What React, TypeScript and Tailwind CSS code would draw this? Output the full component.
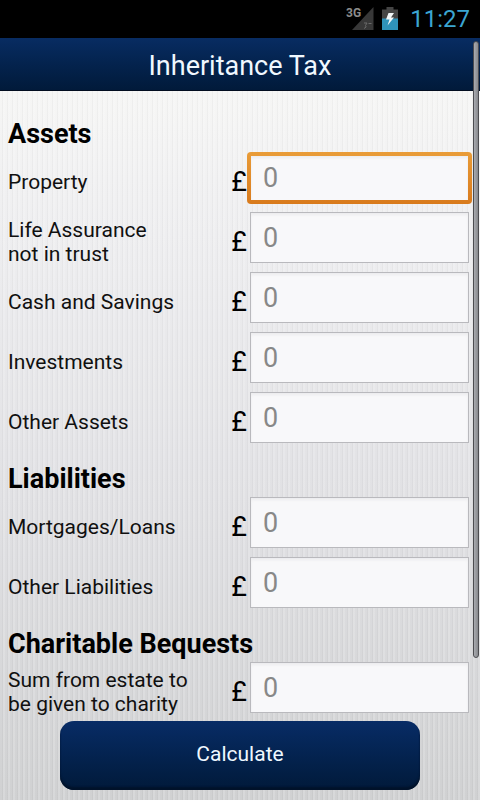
import React from "react";

type Field = { id: string; label: string[]; focused?: boolean };
type Section = { title: string; fields: Field[] };

const sections: Section[] = [
  {
    title: "Assets",
    fields: [
      { id: "property", label: ["Property"], focused: true },
      { id: "life-assurance", label: ["Life Assurance", "not in trust"] },
      { id: "cash", label: ["Cash and Savings"] },
      { id: "investments", label: ["Investments"] },
      { id: "other-assets", label: ["Other Assets"] },
    ],
  },
  {
    title: "Liabilities",
    fields: [
      { id: "mortgages", label: ["Mortgages/Loans"] },
      { id: "other-liabilities", label: ["Other Liabilities"] },
    ],
  },
  {
    title: "Charitable Bequests",
    fields: [{ id: "charity", label: ["Sum from estate to", "be given to charity"] }],
  },
];

function SignalIcon() {
  return (
    <svg width="28" height="24" viewBox="0 0 28 24" aria-hidden="true">
      <path d="M27.500 0V23H6Z" fill="#383838" />
      <path d="M18 16h3l-1.500 2.500q2 1.500-1.500 3M22.500 16.500h3" stroke="#6a6a6a" strokeWidth="1" fill="none" />
      <text x="0" y="10" fontSize="12" fontWeight="700" fill="#8c8c8c" fontFamily="Roboto, sans-serif">
        3G
      </text>
    </svg>
  );
}

function BatteryIcon() {
  return (
    <svg width="16" height="24" viewBox="0 0 16 24" aria-hidden="true">
      <path d="M4.500 0h7v2.500H16V12H0V2.500h4.500Z" fill="#454545" />
      <path d="M0 11.500h16V23H0Z" fill="#2f93ba" />
      <path d="M6.500 6H12L9 10.500H12L5.500 18.500 7.500 12.500H4Z" fill="#f2f6f8" />
    </svg>
  );
}

function FieldRow({ field }: { field: Field }) {
  return (
    <div className="flex h-[60px] items-start pr-2 pl-2">
      <label
        htmlFor={field.id}
        className="flex h-16 flex-1 flex-col justify-center text-[21px] leading-6 text-[#101010]"
      >
        {field.label.map((line) => (
          <span key={line}>{line}</span>
        ))}
      </label>
      <span className="flex h-16 items-center text-[27px] leading-8 text-black">£</span>
      <span
        className={
          field.focused
            ? "mt-[2px] w-[225px] rounded-[4px] bg-linear-to-b from-[#e99c38] to-[#d87a1c] p-1"
            : "mt-[2px] w-[225px] px-[3px]"
        }
      >
        <input
          id={field.id}
          type="text"
          inputMode="decimal"
          placeholder="0"
          className={
            field.focused
              ? "block h-11 w-full bg-[#f8f8fa] px-3 text-[27px] shadow-[inset_0_2px_3px_#ececee] outline-none placeholder:text-[#888]"
              : "block h-[51px] w-full border border-[#b9b9bd] bg-[#f8f8fa] px-3 text-[27px] shadow-[inset_0_2px_3px_#ececee] outline-none placeholder:text-[#888]"
          }
        />
      </span>
    </div>
  );
}

export default function App() {
  return (
    <div className="flex min-h-screen flex-col bg-black font-[Roboto,sans-serif]">
      <div className="flex h-[38px] items-center justify-end pr-[10px]">
        <SignalIcon />
        <span className="ml-2 flex">
          <BatteryIcon />
        </span>
        <span className="ml-3 text-2xl leading-8 text-[#3ba6d2]">11:27</span>
      </div>
      <div className="relative flex flex-1 flex-col">
        <header className="flex h-[53px] items-center justify-center border-b border-[#020d20] bg-linear-to-b from-[#082c62] to-[#011a3a] pt-1">
          <h1 className="text-[27px] leading-8 text-[#f0f8ff]">Inheritance Tax</h1>
        </header>
        <main className="flex-1 bg-[repeating-linear-gradient(90deg,#0000_0_2px,#00000007_2px_3px,#ffffff28_3px_5px),linear-gradient(#f6f6f5,#eeeef0_20%,#e0e0e3_60%,#d0d1d2)] pt-[14px] pb-[10px]">
          <form onSubmit={(event) => event.preventDefault()}>
            {sections.map((section) => (
              <section key={section.title}>
                <h2 className="h-[45px] pt-[13px] pl-2 text-[27px] leading-8 font-bold text-black">
                  {section.title}
                </h2>
                {section.fields.map((field) => (
                  <FieldRow key={field.id} field={field} />
                ))}
              </section>
            ))}
            <button
              type="submit"
              className="mx-auto mt-px block h-[69px] w-3/4 rounded-[14px] bg-linear-to-b from-[#082c66] to-[#011a3a] pb-1 text-[21px] leading-6 text-[#eef8ff] shadow-[inset_0_-3px_2px_#01122a]"
            >
              Calculate
            </button>
          </form>
        </main>
        <div className="absolute top-[3px] right-px h-[617px] w-[6px] rounded-full border border-[#4c4c50] bg-linear-to-r from-[#a9abb0] to-[#88898d]" />
      </div>
    </div>
  );
}
